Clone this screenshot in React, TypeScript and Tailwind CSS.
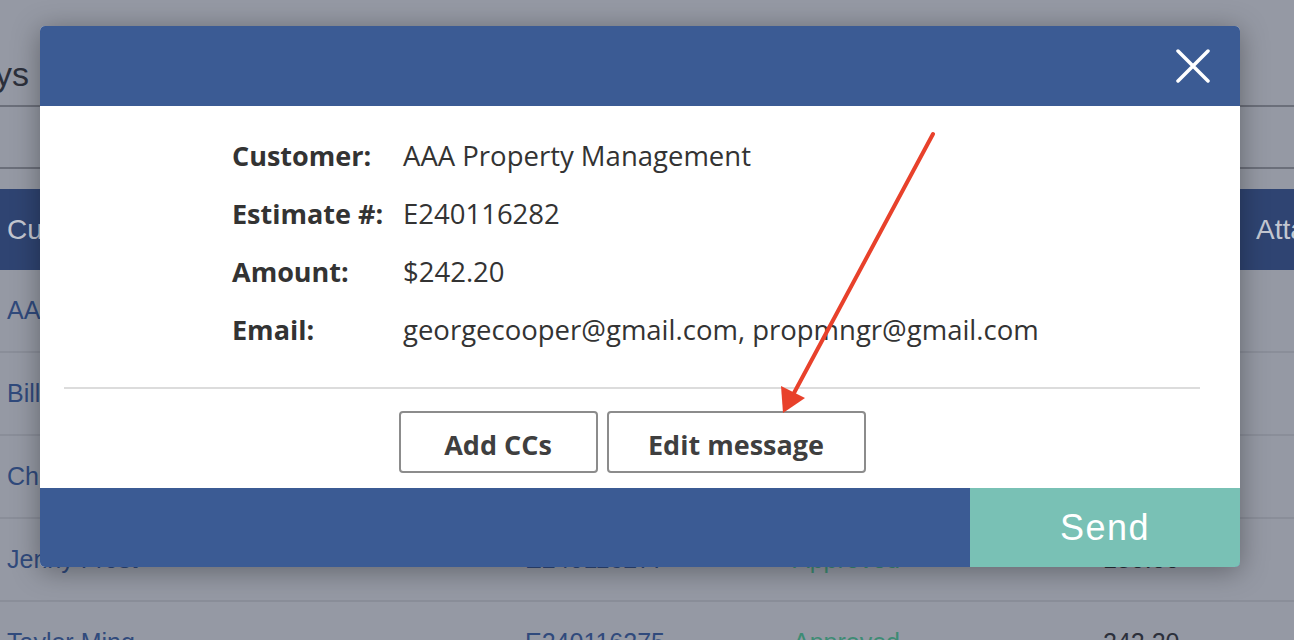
import React from "react";

const rows = [
  { name: "AAA Property Management", est: "E240116282", status: "Approved", amount: "242.20" },
  { name: "Bill Hastings", est: "E240116279", status: "Approved", amount: "318.00" },
  { name: "Chris Palmer", est: "E240116278", status: "Approved", amount: "96.50" },
  { name: "Jenny Frost", est: "E240116277", status: "Approved", amount: "150.00" },
  { name: "Taylor Ming", est: "E240116275", status: "Approved", amount: "242.20" },
];

const cols = "grid grid-cols-[518px_268px_310px_153px_1fr]";

function Backdrop() {
  return (
    <div className="font-['Liberation_Sans',Arial,sans-serif]">
      <div className="h-[107px] border-b-2 border-[#6b6f7a] flex items-end pb-[14px]">
        <span className="text-[34px] leading-none text-[#2c303b] -ml-[5px]">ys</span>
      </div>
      <div className="h-[62px] border-b-2 border-[#6b6f7a]" />
      <div className="h-[20px]" />
      <div className={`${cols} h-[81px] items-center bg-[#2f4472] text-[#c3c7d1] text-[28px]`}>
        <div className="pl-[7px]">Customer</div>
        <div className="pl-[7px]">Estimate #</div>
        <div className="pl-[7px]">Status</div>
        <div className="pl-[7px]">Amount</div>
        <div className="pl-[7px]">Attachments</div>
      </div>
      {rows.map((r) => (
        <div
          key={r.est}
          className={`${cols} h-[83px] items-center border-b-2 border-[#8a8e99] text-[25px] text-[#304a7c]`}
        >
          <div className="pl-[7px]">{r.name}</div>
          <div className="pl-[7px]">{r.est}</div>
          <div className="pl-[7px] text-[#3d8c74]">{r.status}</div>
          <div className="pl-[7px] text-[#2c303b]">{r.amount}</div>
          <div />
        </div>
      ))}
    </div>
  );
}

function Modal() {
  const fields = [
    ["Customer:", "AAA Property Management"],
    ["Estimate #:", "E240116282"],
    ["Amount:", "$242.20"],
    ["Email:", "georgecooper@gmail.com, propmngr@gmail.com"],
  ];
  return (
    <div className="absolute left-[40px] top-[26px] w-[1200px] rounded-[5px] overflow-hidden bg-white shadow-[0_4px_28px_rgba(0,0,0,0.35)] font-['Open_Sans',sans-serif]">
      <div className="h-[80px] bg-[#3b5b94] flex items-center justify-end pr-[30px]">
        <svg width="34" height="34" viewBox="0 0 34 34">
          <path d="M2 2 L32 32 M32 2 L2 32" stroke="white" strokeWidth="3.5" strokeLinecap="round" />
        </svg>
      </div>
      <div className="h-[382px] pt-[21px]">
        <div className="pl-[192px] grid grid-cols-[171px_1fr]">
          {fields.map(([k, v]) => (
            <React.Fragment key={k}>
              <div className="h-[58px] leading-[58px] text-[27px] font-bold text-[#333]">{k}</div>
              <div className="h-[58px] leading-[58px] text-[27.5px] text-[#333]">{v}</div>
            </React.Fragment>
          ))}
        </div>
        <div className="ml-[24px] mr-[40px] mt-[28px] border-t-2 border-[#dcdcdc] pt-[22px] flex justify-center gap-[9px]">
          <button className="w-[199px] h-[62px] rounded-[4px] border-2 border-[#8c8c8c] text-[27px] font-bold text-[#3f3f3f] leading-none pt-[4px]">
            Add CCs
          </button>
          <button className="w-[259px] h-[62px] rounded-[4px] border-2 border-[#8c8c8c] text-[27px] font-bold text-[#3f3f3f] leading-none pt-[4px]">
            Edit message
          </button>
        </div>
      </div>
      <div className="h-[79px] bg-[#3b5b94] flex justify-end">
        <button className="w-[270px] h-full bg-[#79c1b5] text-white text-[36px] tracking-[1.5px] font-['Liberation_Sans',Arial,sans-serif]">
          Send
        </button>
      </div>
    </div>
  );
}

export default function App() {
  return (
    <div className="relative w-full h-[640px] overflow-hidden bg-[#9599a4]">
      <Backdrop />
      <Modal />
      <svg className="absolute left-0 top-0 pointer-events-none" width="1294" height="640">
        <line x1="933" y1="134" x2="794" y2="393" stroke="#e8412b" strokeWidth="4" strokeLinecap="round" />
        <polygon points="783,413 781,386 805,398" fill="#e8412b" />
      </svg>
    </div>
  );
}
